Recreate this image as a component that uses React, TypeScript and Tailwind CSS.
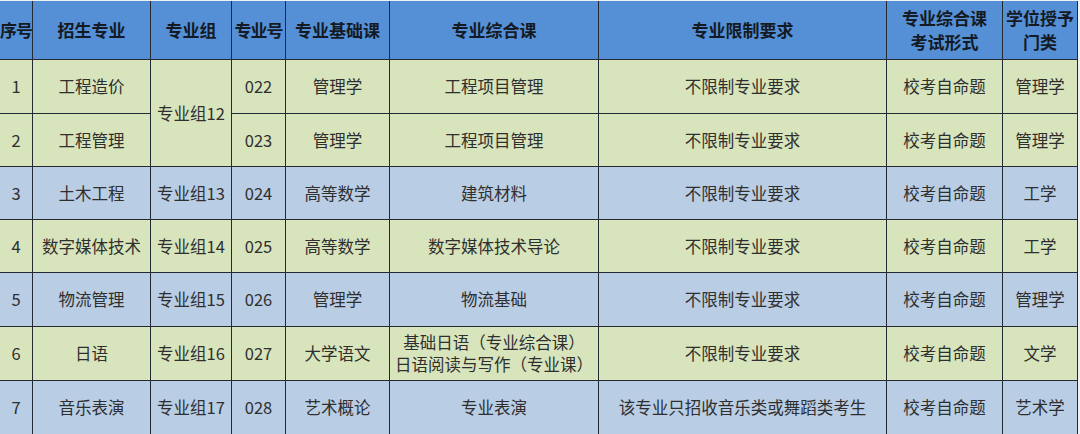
import React from "react";

type Row = {
	no: string;
	major: string;
	group?: string;
	groupSpan?: number;
	code: string;
	basic: string;
	comp: string[];
	limit: string;
	exam: string;
	degree: string;
	bg: string;
	h: string;
};

const GREEN = "bg-[#d8e4bc]";
const BLUE = "bg-[#b9cde5]";

const rows: Row[] = [
	{ no: "1", major: "工程造价", group: "专业组12", groupSpan: 2, code: "022", basic: "管理学", comp: ["工程项目管理"], limit: "不限制专业要求", exam: "校考自命题", degree: "管理学", bg: GREEN, h: "h-[54px]" },
	{ no: "2", major: "工程管理", code: "023", basic: "管理学", comp: ["工程项目管理"], limit: "不限制专业要求", exam: "校考自命题", degree: "管理学", bg: GREEN, h: "h-[53px]" },
	{ no: "3", major: "土木工程", group: "专业组13", code: "024", basic: "高等数学", comp: ["建筑材料"], limit: "不限制专业要求", exam: "校考自命题", degree: "工学", bg: BLUE, h: "h-[53px]" },
	{ no: "4", major: "数字媒体技术", group: "专业组14", code: "025", basic: "高等数学", comp: ["数字媒体技术导论"], limit: "不限制专业要求", exam: "校考自命题", degree: "工学", bg: GREEN, h: "h-[53px]" },
	{ no: "5", major: "物流管理", group: "专业组15", code: "026", basic: "管理学", comp: ["物流基础"], limit: "不限制专业要求", exam: "校考自命题", degree: "管理学", bg: BLUE, h: "h-[54px]" },
	{ no: "6", major: "日语", group: "专业组16", code: "027", basic: "大学语文", comp: ["基础日语（专业综合课）", "日语阅读与写作（专业课）"], limit: "不限制专业要求", exam: "校考自命题", degree: "文学", bg: GREEN, h: "h-[54px]" },
	{ no: "7", major: "音乐表演", group: "专业组17", code: "028", basic: "艺术概论", comp: ["专业表演"], limit: "该专业只招收音乐类或舞蹈类考生", exam: "校考自命题", degree: "艺术学", bg: BLUE, h: "h-[54px]" },
];

const cell = "border border-[#232a33] text-center align-middle p-0 whitespace-nowrap overflow-hidden";

function App() {
	return (
		<div
			className="w-[1080px] h-[434px] bg-[#eef0f2] pt-[1px] overflow-hidden"
			style={{ fontFamily: '"Noto Sans CJK SC", "Noto Sans", sans-serif' }}
		>
			<table className="table-fixed border-collapse w-[1078px] -ml-[1px] text-[#2f2f2f] text-[16.5px] leading-[22px]">
				<colgroup>
					<col className="w-[33px]" />
					<col className="w-[118px]" />
					<col className="w-[81px]" />
					<col className="w-[54px]" />
					<col className="w-[104px]" />
					<col className="w-[209px]" />
					<col className="w-[288px]" />
					<col className="w-[116px]" />
					<col className="w-[75px]" />
				</colgroup>
				<thead>
					{/* header */}
					<tr className="h-[58px] bg-[#5590d6] text-[#141a24] text-[17px] font-bold leading-[24px]">
						<th className={`${cell} border-t-0 tracking-[-1px]`}>序号</th>
						<th className={`${cell} border-t-0`}>招生专业</th>
						<th className={`${cell} border-t-0`}>专业组</th>
						<th className={`${cell} border-t-0 tracking-[-1px]`}>专业号</th>
						<th className={`${cell} border-t-0`}>专业基础课</th>
						<th className={`${cell} border-t-0`}>专业综合课</th>
						<th className={`${cell} border-t-0`}>专业限制要求</th>
						<th className={`${cell} border-t-0`}>
							专业综合课
							<br />
							考试形式
						</th>
						<th className={`${cell} border-t-0`}>
							学位授予
							<br />
							门类
						</th>
					</tr>
				</thead>
				<tbody>
					{rows.map((r) => (
						<tr key={r.no} className={`${r.bg} ${r.h}`}>
							<td className={cell}>{r.no}</td>
							<td className={cell}>{r.major}</td>
							{r.group && (
								<td className={cell} rowSpan={r.groupSpan ?? 1}>
									{r.group}
								</td>
							)}
							<td className={cell}>{r.code}</td>
							<td className={cell}>{r.basic}</td>
							<td className={cell}>
								{r.comp.map((c) => (
									<div key={c}>{c}</div>
								))}
							</td>
							<td className={cell}>{r.limit}</td>
							<td className={cell}>{r.exam}</td>
							<td className={cell}>{r.degree}</td>
						</tr>
					))}
				</tbody>
			</table>
		</div>
	);
}

export default App;
